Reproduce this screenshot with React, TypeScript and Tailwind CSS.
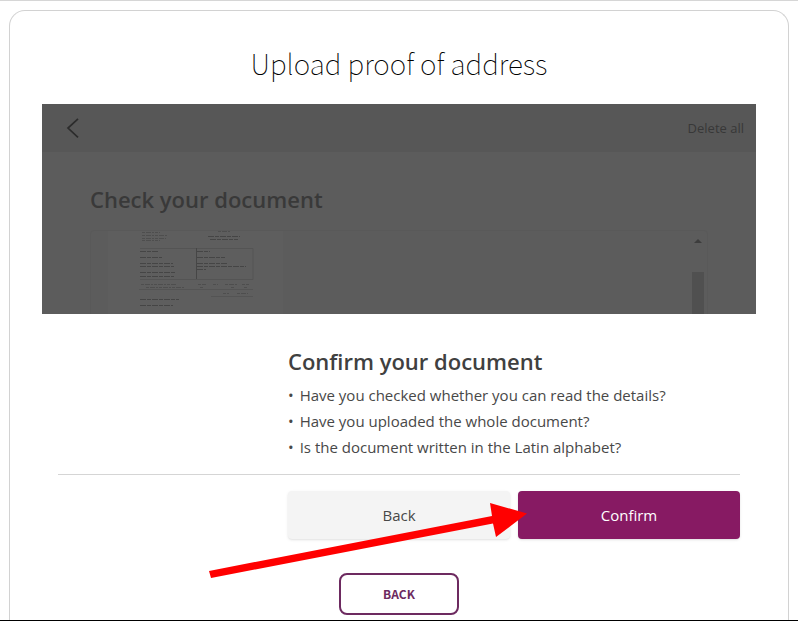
import clsx from "clsx";

const checks = [
  "Have you checked whether you can read the details?",
  "Have you uploaded the whole document?",
  "Is the document written in the Latin alphabet?",
];

function DocumentThumbnail() {
  return (
    <svg viewBox="0 0 175 83" className="block h-[83px] w-[175px]" aria-hidden="true">
      <rect width="175" height="83" fill="#5e5e5e" />
      <g stroke="#4e4e4e" strokeWidth="1" strokeDasharray="3 1 5 1 2 1">
        <path d="M34 1.5h18M34 4.5h26M34 7.5h24M34 9.5h18M110 .5h13" />
        <path d="M33 53.5h36M38 56.5h38M90 53.5h8M105 53.5h5M117 53.5h13M134 53.5h7M92 56.5h4M123 56.5h4M136 56.5h4M115 62.5h6M129 62.5h11" />
      </g>
      <g stroke="#454545" strokeWidth="1" strokeDasharray="6 1 4 1">
        <path d="M100 5.5h32M102 8.5h28M32 20.5h18M89 20.5h13M32 26.5h22M89 26.5h28" />
        <path d="M32 32.5h33M32 35.5h34M89 32.5h30M89 35.5h49M32 41.5h36M32 45.5h34M32 68.5h39M32 74.5h33" />
        <path d="M89 38.5h9" />
      </g>
      <path d="M32 17.5h113v31H32M31 58.500h114M103 65.500h42" fill="none" stroke="#545454" />
      <path d="M88.500 17v31" stroke="#464646" />
    </svg>
  );
}

function SectionTitle({ children, className }: { children: string; className?: string }) {
  return <h2 className={clsx("text-[22px] leading-[30px] font-semibold", className)}>{children}</h2>;
}

function DocumentPreview() {
  return (
    <section className="h-[210px] overflow-hidden bg-[#5c5c5c] text-[#393939]">
      <header className="flex h-12 items-center justify-between bg-[#575757] pr-3 pl-6">
        <button type="button" aria-label="Go back">
          <svg viewBox="0 0 14 20" className="h-5 w-3.5" fill="none" stroke="#2c2c2c" strokeWidth="1.7">
            <path d="M12 .8L2 10l10 9.300" />
          </svg>
        </button>
        <button type="button" className="text-[13px] leading-5 text-[#383838]">
          Delete all
        </button>
      </header>
      <div className="px-12 pt-8">
        <SectionTitle>Check your document</SectionTitle>
        <div className="mt-4 flex h-[90px] justify-between rounded-sm border border-[#595959] pr-0.5 pl-[17px]">
          <DocumentThumbnail />
          <div className="flex w-3.5 flex-col items-center">
            <svg viewBox="0 0 8 4" className="mt-2 h-1 w-2" aria-hidden="true">
              <path d="M4 0L8 4H0z" fill="#3d3d3d" />
            </svg>
            <div className="mt-[29px] w-3 grow bg-[#505050]" />
          </div>
        </div>
      </div>
    </section>
  );
}

function Pointer() {
  return (
    <svg
      viewBox="0 0 320 80"
      className="pointer-events-none absolute top-2.5 -left-[309px] h-20 w-80"
      aria-hidden="true"
    >
      <path d="M0 70L283 15L281 2L318 12.500L287 36L284 22.500L2 77z" fill="#f00" />
    </svg>
  );
}

function ConfirmDialog() {
  return (
    <section className="px-4 pt-8">
      <div className="grid grid-cols-3 gap-x-2 border-b border-[#d5d5d5] pb-3.5 text-[#404040]">
        <div className="col-span-2 col-start-2">
          <SectionTitle>Confirm your document</SectionTitle>
          <ul className="mt-1.5 text-[15px] leading-[26px] text-[#484848]">
            {checks.map((check) => (
              <li key={check} className="flex gap-1.5">
                <span>•</span>
                {check}
              </li>
            ))}
          </ul>
        </div>
      </div>
      <div className="grid grid-cols-3 gap-x-2 pt-4">
        <button
          type="button"
          className="col-start-2 h-12 rounded bg-[#f4f4f4] text-[15px] text-[#484848] shadow-sm"
        >
          Back
        </button>
        <div className="relative">
          <button type="button" className="h-12 w-full rounded bg-[#871a63] text-[15px] text-white shadow-sm">
            Confirm
          </button>
          <Pointer />
        </div>
      </div>
    </section>
  );
}

export default function App() {
  return (
    <div className="border-t border-b border-t-[#d6d6d6] border-b-black bg-white px-[9px] pt-[9px] font-['Open_Sans',sans-serif]">
      <main className="rounded-t-2xl border border-b-0 border-[#d2d2d2] px-8 pt-8 pb-[5px]">
        <h1 className="mb-5 text-center font-['Noto_Sans_CJK_SC',sans-serif] text-[28px] leading-[41px] font-thin text-black">
          Upload proof of address
        </h1>
        <DocumentPreview />
        <ConfirmDialog />
        <div className="flex justify-center pt-[34px]">
          <button
            type="button"
            className="h-[42px] w-[120px] rounded-lg border-2 border-[#6d2a60] font-['Noto_Sans_CJK_JP',sans-serif] text-[12px] font-bold text-[#6d2a60]"
          >
            BACK
          </button>
        </div>
      </main>
    </div>
  );
}
